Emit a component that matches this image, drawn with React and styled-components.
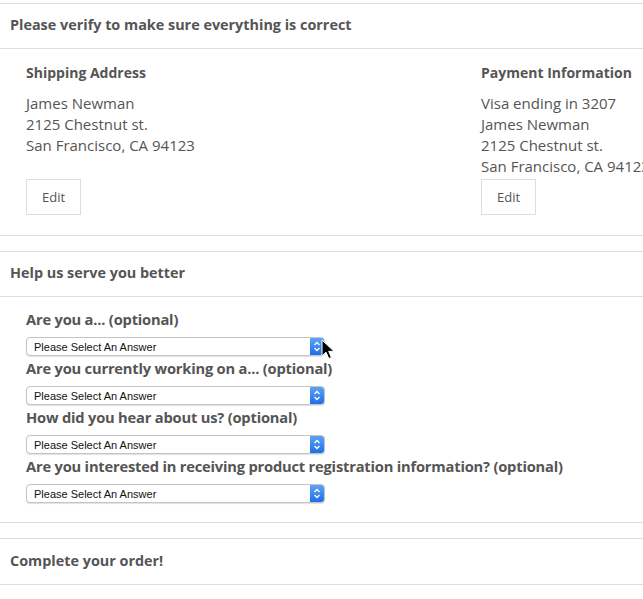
import styled, { createGlobalStyle } from "styled-components";

const GlobalStyle = createGlobalStyle`
  html, body {
    margin: 0;
    background: #fff;
  }
  body {
    font-family: "Open Sans", "Liberation Sans", Arial, sans-serif;
    color: #555;
  }
`;

const Page = styled.div`
  padding-top: 3px;
  display: flex;
  flex-direction: column;
  gap: 15px;
`;

const Section = styled.section`
  border-top: 1px solid #ddd;
  border-bottom: 1px solid #ddd;
`;

const SectionHeader = styled.h2`
  margin: 0;
  height: 45px;
  box-sizing: border-box;
  padding: 0 0 3px 10px;
  display: flex;
  align-items: center;
  font-size: 14.4px;
  font-weight: 700;
  color: #555;
  border-bottom: ${(p) => (p.$open ? "1px solid #ddd" : "none")};
`;

const Columns = styled.div`
  display: grid;
  grid-template-columns: 455px 1fr;
  padding: 14px 0 20px 26px;
  overflow: hidden;
`;

const Column = styled.div`
  display: flex;
  flex-direction: column;
  white-space: nowrap;
`;

const ColumnTitle = styled.h3`
  margin: 0 0 10px;
  font-size: 14px;
  font-weight: 700;
  line-height: 20px;
  color: #555;
`;

const Lines = styled.div`
  font-size: 15px;
  line-height: 21px;
  color: #555;
`;

const EditButton = styled.button`
  margin-top: auto;
  align-self: flex-start;
  width: 55px;
  height: 36px;
  background: #fff;
  border: 1px solid #ddd;
  font-family: inherit;
  font-size: 13px;
  color: #555;
  cursor: pointer;
`;

const Spacer = styled.div`
  height: 2px;
  flex-shrink: 0;
`;

const Questions = styled.div`
  padding: 12px 0 18px 26px;
  display: flex;
  flex-direction: column;
  gap: 1px;
`;

const Question = styled.div`
  display: flex;
  flex-direction: column;
  gap: 8px;
  position: relative;
`;

const Label = styled.label`
  font-size: 14.7px;
  font-weight: 700;
  line-height: 20px;
  color: #555;
  letter-spacing: -0.2px;
`;

const SelectBox = styled.div`
  width: 299px;
  height: 19px;
  margin-bottom: 1px;
  box-sizing: border-box;
  display: flex;
  align-items: center;
  border: 1px solid #c4c4c4;
  border-radius: 4px;
  box-shadow: 0 1px 1px rgba(0, 0, 0, 0.12);
  background: #fff;
  overflow: hidden;
`;

const SelectText = styled.span`
  flex: 1;
  padding-left: 7px;
  font-family: "Liberation Sans", Arial, sans-serif;
  font-size: 11px;
  color: #111;
`;

const Stepper = styled.span`
  width: 14px;
  height: 100%;
  background: linear-gradient(#5ba3f7, #1f6fe6);
  display: flex;
  align-items: center;
  justify-content: center;
`;

const Cursor = styled.svg`
  position: absolute;
  left: 295px;
  top: 30px;
`;

const questions = [
  "Are you a... (optional)",
  "Are you currently working on a... (optional)",
  "How did you hear about us? (optional)",
  "Are you interested in receiving product registration information? (optional)",
];

const Select = () => (
  <SelectBox>
    <SelectText>Please Select An Answer</SelectText>
    <Stepper>
      <svg width="8" height="11" viewBox="0 0 8 11">
        <path d="M1.5 4 L4 1.5 L6.5 4 M1.5 7 L4 9.5 L6.5 7" fill="none" stroke="#fff" strokeWidth="1.3" />
      </svg>
    </Stepper>
  </SelectBox>
);

const App = () => {
  return (
    <>
      <GlobalStyle />
      <Page>
        <Section>
          <SectionHeader $open>Please verify to make sure everything is correct</SectionHeader>
          <Columns>
            <Column>
              <ColumnTitle>Shipping Address</ColumnTitle>
              <Lines>
                James Newman
                <br />
                2125 Chestnut st.
                <br />
                San Francisco, CA 94123
              </Lines>
              <Spacer />
              <EditButton>Edit</EditButton>
            </Column>
            <Column>
              <ColumnTitle>Payment Information</ColumnTitle>
              <Lines>
                Visa ending in 3207
                <br />
                James Newman
                <br />
                2125 Chestnut st.
                <br />
                San Francisco, CA 94123
              </Lines>
              <Spacer />
              <EditButton>Edit</EditButton>
            </Column>
          </Columns>
        </Section>

        <Section>
          <SectionHeader $open>Help us serve you better</SectionHeader>
          <Questions>
            {questions.map((q, i) => (
              <Question key={q}>
                <Label>{q}</Label>
                <Select />
                {i === 0 && (
                  <Cursor width="14" height="22" viewBox="0 0 14 22">
                    <path d="M1 1 L1 17 L5 13.2 L7.8 19.6 L10.4 18.5 L7.7 12.3 L13 12.3 Z" fill="#000" stroke="#fff" strokeWidth="1" />
                  </Cursor>
                )}
              </Question>
            ))}
          </Questions>
        </Section>

        <Section>
          <SectionHeader>Complete your order!</SectionHeader>
        </Section>
      </Page>
    </>
  );
};

export default App;
